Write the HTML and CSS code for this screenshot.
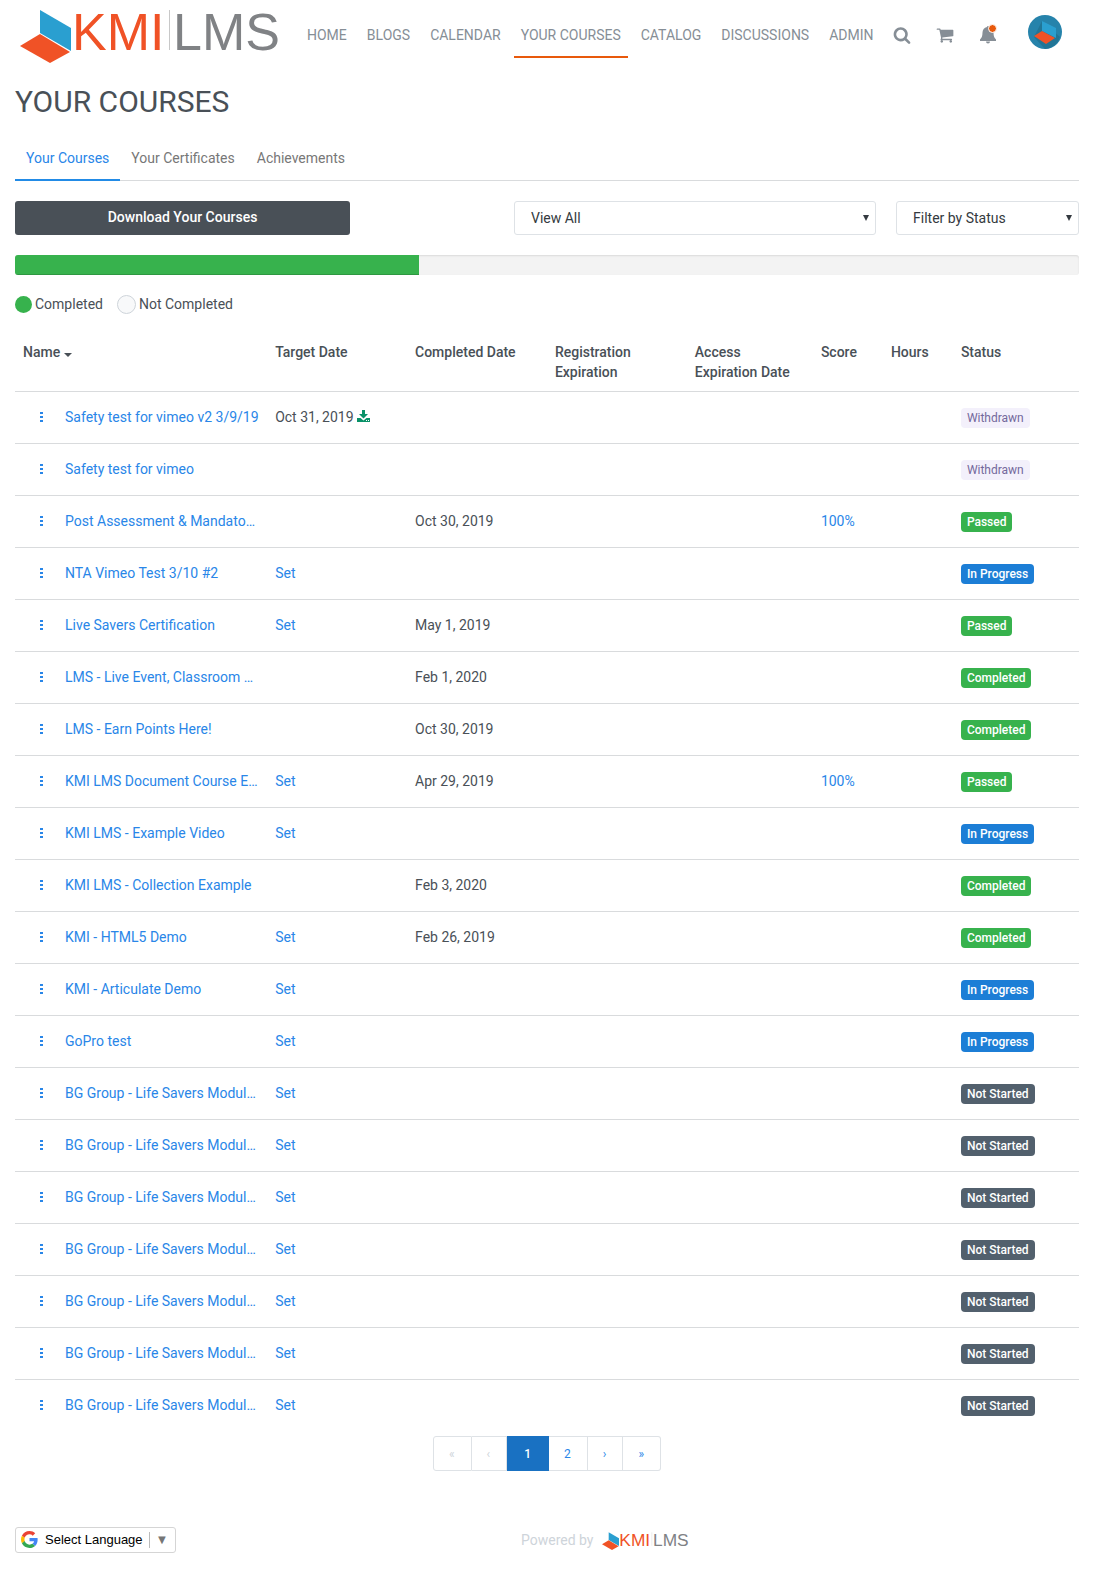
FILE: index.html
```
<!DOCTYPE html>
<html lang="en">

<head>
    <meta charset="UTF-8">
    <meta name="viewport" content="width=device-width, initial-scale=1.0">
    <title>Your Courses - KMI LMS</title>
    <link rel="stylesheet" href="styles.css">
</head>

<body>
    <!-- Shared logo, used in the header and the footer -->
    <svg class="sprite" aria-hidden="true">
        <symbol id="kmi-logo" viewBox="0 0 264 66">
            <path fill="#2a9fd0" d="M20 10 51 28V51L20 33z" />
            <path fill="#f05226" d="M0 46 20 34 50 52 30 63z" />
            <text class="logo-kmi" x="52" y="50">KMI</text>
            <path stroke="#c8c8c8" d="M149.500 10V50" />
            <text class="logo-lms" x="153" y="50">LMS</text>
        </symbol>
    </svg>

    <header class="header">
        <a href="#" class="brand" aria-label="KMI LMS"><svg><use href="#kmi-logo" /></svg></a>
        <nav class="nav">
            <a href="#">HOME</a>
            <a href="#">BLOGS</a>
            <a href="#">CALENDAR</a>
            <a href="#" class="active">YOUR COURSES</a>
            <a href="#">CATALOG</a>
            <a href="#">DISCUSSIONS</a>
            <a href="#">ADMIN</a>
        </nav>
        <div class="header-icons">
            <a href="#" aria-label="Search">
                <svg viewBox="0 0 1792 1792"><path d="M1216 832q0-185-131.500-316.500t-316.500-131.500-316.500 131.500-131.500 316.500 131.500 316.500 316.500 131.500 316.500-131.500 131.500-316.500zm512 832q0 52-38 90t-90 38q-54 0-90-38l-343-342q-179 124-399 124-143 0-273.500-55.500t-225-150-150-225-55.500-273.500 55.500-273.500 150-225 225-150 273.500-55.500 273.500 55.500 225 150 150 225 55.500 273.500q0 220-124 399l343 343q37 37 37 90z" /></svg>
            </a>
            <a href="#" aria-label="Cart">
                <svg viewBox="0 0 1792 1792"><path d="M704 1536q0 52-38 90t-90 38-90-38-38-90 38-90 90-38 90 38 38 90zm896 0q0 52-38 90t-90 38-90-38-38-90 38-90 90-38 90 38 38 90zm128-1088v512q0 24-16.500 42.500t-40.500 21.500l-1044 122q13 60 13 70 0 16-24 64h920q26 0 45 19t19 45-19 45-45 19h-1024q-26 0-45-19t-19-45q0-11 8-31.500t16-36 21.500-40 15.500-29.500l-177-823h-204q-26 0-45-19t-19-45 19-45 45-19h256q16 0 28.500 6.500t19.500 15.500 13 24.500 8 26 5.500 29.500 4.500 26h1201q26 0 45 19t19 45z" /></svg>
            </a>
            <a href="#" class="bell" aria-label="Notifications">
                <svg viewBox="0 0 18 18"><path d="M8 1a1 1 0 0 1 2 0c3 .600 4.500 3 4.500 5.500 0 4 1 5.500 2.500 7V15H1v-1.500c1.500-1.500 2.500-3 2.500-7C3.500 4 5 1.600 8 1zM7 15.500h4a2 2 0 0 1-4 0z" /></svg>
                <span class="dot"></span>
            </a>
        </div>
        <a href="#" class="avatar" aria-label="Profile">
            <svg viewBox="0 0 34 34">
                <circle cx="17" cy="17" r="17" fill="#2683ab" />
                <path fill="#217596" d="M14 6 6 22l11 12a17 17 0 0 0 15-12z" />
                <path fill="#2a9fd0" d="M14 6 28 13V23L14 16z" />
                <path fill="#f05226" d="M6 21 14 16 27 23 18 29z" />
            </svg>
        </a>
    </header>

    <main class="content">
        <h1>YOUR COURSES</h1>

        <nav class="tabs">
            <a href="#" class="active">Your Courses</a>
            <a href="#">Your Certificates</a>
            <a href="#">Achievements</a>
        </nav>

        <div class="toolbar">
            <button type="button" class="btn-download">Download Your Courses</button>
            <div class="select view">
                <select aria-label="View">
                    <option>View All</option>
                </select>
            </div>
            <div class="select">
                <select aria-label="Status">
                    <option>Filter by Status</option>
                </select>
            </div>
        </div>

        <div class="progress" role="progressbar" aria-label="Completed" aria-valuenow="38" aria-valuemin="0" aria-valuemax="100">
            <div class="progress-bar" style="width: 38%"></div>
        </div>

        <div class="legend">
            <span class="circle done"></span><span class="legend-text">Completed</span>
            <span class="circle"></span><span class="legend-text">Not Completed</span>
        </div>

        <table class="courses">
            <colgroup>
                <col class="col-name">
                <col class="col-date">
                <col class="col-date">
                <col class="col-date">
                <col class="col-access">
                <col class="col-small">
                <col class="col-small">
                <col class="col-status">
            </colgroup>
            <thead>
                <tr>
                    <th>Name <span class="caret"></span></th>
                    <th>Target Date</th>
                    <th>Completed Date</th>
                    <th>Registration Expiration</th>
                    <th>Access Expiration Date</th>
                    <th>Score</th>
                    <th>Hours</th>
                    <th>Status</th>
                </tr>
            </thead>
            <tbody>
                <tr>
                    <td><div class="name"><button type="button" class="more" aria-label="Options"></button><a href="#">Safety test for vimeo v2 3/9/19</a></div></td>
                    <td>Oct 31, 2019 <a href="#" class="download" aria-label="Download"><svg viewBox="0 0 13 12"><path fill-rule="evenodd" d="M5 0h3v4h3L6.500 8.500 2 4h3zM0 8h3.500l3 2.500L9.500 8H13v4H0zM9 10v1h1v-1zM11 10v1h1v-1z" /></svg></a></td>
                    <td></td><td></td><td></td><td></td><td></td>
                    <td><span class="badge withdrawn">Withdrawn</span></td>
                </tr>
                <tr>
                    <td><div class="name"><button type="button" class="more" aria-label="Options"></button><a href="#">Safety test for vimeo</a></div></td>
                    <td></td><td></td><td></td><td></td><td></td><td></td>
                    <td><span class="badge withdrawn">Withdrawn</span></td>
                </tr>
                <tr>
                    <td><div class="name"><button type="button" class="more" aria-label="Options"></button><a href="#">Post Assessment &amp; Mandato…</a></div></td>
                    <td></td>
                    <td>Oct 30, 2019</td>
                    <td></td><td></td>
                    <td><a href="#">100%</a></td>
                    <td></td>
                    <td><span class="badge passed">Passed</span></td>
                </tr>
                <tr>
                    <td><div class="name"><button type="button" class="more" aria-label="Options"></button><a href="#">NTA Vimeo Test 3/10 #2</a></div></td>
                    <td><a href="#">Set</a></td>
                    <td></td><td></td><td></td><td></td><td></td>
                    <td><span class="badge in-progress">In Progress</span></td>
                </tr>
                <tr>
                    <td><div class="name"><button type="button" class="more" aria-label="Options"></button><a href="#">Live Savers Certification</a></div></td>
                    <td><a href="#">Set</a></td>
                    <td>May 1, 2019</td>
                    <td></td><td></td><td></td><td></td>
                    <td><span class="badge passed">Passed</span></td>
                </tr>
                <tr>
                    <td><div class="name"><button type="button" class="more" aria-label="Options"></button><a href="#">LMS - Live Event, Classroom …</a></div></td>
                    <td></td>
                    <td>Feb 1, 2020</td>
                    <td></td><td></td><td></td><td></td>
                    <td><span class="badge completed">Completed</span></td>
                </tr>
                <tr>
                    <td><div class="name"><button type="button" class="more" aria-label="Options"></button><a href="#">LMS - Earn Points Here!</a></div></td>
                    <td></td>
                    <td>Oct 30, 2019</td>
                    <td></td><td></td><td></td><td></td>
                    <td><span class="badge completed">Completed</span></td>
                </tr>
                <tr>
                    <td><div class="name"><button type="button" class="more" aria-label="Options"></button><a href="#">KMI LMS Document Course E…</a></div></td>
                    <td><a href="#">Set</a></td>
                    <td>Apr 29, 2019</td>
                    <td></td><td></td>
                    <td><a href="#">100%</a></td>
                    <td></td>
                    <td><span class="badge passed">Passed</span></td>
                </tr>
                <tr>
                    <td><div class="name"><button type="button" class="more" aria-label="Options"></button><a href="#">KMI LMS - Example Video</a></div></td>
                    <td><a href="#">Set</a></td>
                    <td></td><td></td><td></td><td></td><td></td>
                    <td><span class="badge in-progress">In Progress</span></td>
                </tr>
                <tr>
                    <td><div class="name"><button type="button" class="more" aria-label="Options"></button><a href="#">KMI LMS - Collection Example</a></div></td>
                    <td></td>
                    <td>Feb 3, 2020</td>
                    <td></td><td></td><td></td><td></td>
                    <td><span class="badge completed">Completed</span></td>
                </tr>
                <tr>
                    <td><div class="name"><button type="button" class="more" aria-label="Options"></button><a href="#">KMI - HTML5 Demo</a></div></td>
                    <td><a href="#">Set</a></td>
                    <td>Feb 26, 2019</td>
                    <td></td><td></td><td></td><td></td>
                    <td><span class="badge completed">Completed</span></td>
                </tr>
                <tr>
                    <td><div class="name"><button type="button" class="more" aria-label="Options"></button><a href="#">KMI - Articulate Demo</a></div></td>
                    <td><a href="#">Set</a></td>
                    <td></td><td></td><td></td><td></td><td></td>
                    <td><span class="badge in-progress">In Progress</span></td>
                </tr>
                <tr>
                    <td><div class="name"><button type="button" class="more" aria-label="Options"></button><a href="#">GoPro test</a></div></td>
                    <td><a href="#">Set</a></td>
                    <td></td><td></td><td></td><td></td><td></td>
                    <td><span class="badge in-progress">In Progress</span></td>
                </tr>
                <tr>
                    <td><div class="name"><button type="button" class="more" aria-label="Options"></button><a href="#">BG Group - Life Savers Modul…</a></div></td>
                    <td><a href="#">Set</a></td>
                    <td></td><td></td><td></td><td></td><td></td>
                    <td><span class="badge not-started">Not Started</span></td>
                </tr>
                <tr>
                    <td><div class="name"><button type="button" class="more" aria-label="Options"></button><a href="#">BG Group - Life Savers Modul…</a></div></td>
                    <td><a href="#">Set</a></td>
                    <td></td><td></td><td></td><td></td><td></td>
                    <td><span class="badge not-started">Not Started</span></td>
                </tr>
                <tr>
                    <td><div class="name"><button type="button" class="more" aria-label="Options"></button><a href="#">BG Group - Life Savers Modul…</a></div></td>
                    <td><a href="#">Set</a></td>
                    <td></td><td></td><td></td><td></td><td></td>
                    <td><span class="badge not-started">Not Started</span></td>
                </tr>
                <tr>
                    <td><div class="name"><button type="button" class="more" aria-label="Options"></button><a href="#">BG Group - Life Savers Modul…</a></div></td>
                    <td><a href="#">Set</a></td>
                    <td></td><td></td><td></td><td></td><td></td>
                    <td><span class="badge not-started">Not Started</span></td>
                </tr>
                <tr>
                    <td><div class="name"><button type="button" class="more" aria-label="Options"></button><a href="#">BG Group - Life Savers Modul…</a></div></td>
                    <td><a href="#">Set</a></td>
                    <td></td><td></td><td></td><td></td><td></td>
                    <td><span class="badge not-started">Not Started</span></td>
                </tr>
                <tr>
                    <td><div class="name"><button type="button" class="more" aria-label="Options"></button><a href="#">BG Group - Life Savers Modul…</a></div></td>
                    <td><a href="#">Set</a></td>
                    <td></td><td></td><td></td><td></td><td></td>
                    <td><span class="badge not-started">Not Started</span></td>
                </tr>
                <tr>
                    <td><div class="name"><button type="button" class="more" aria-label="Options"></button><a href="#">BG Group - Life Savers Modul…</a></div></td>
                    <td><a href="#">Set</a></td>
                    <td></td><td></td><td></td><td></td><td></td>
                    <td><span class="badge not-started">Not Started</span></td>
                </tr>
            </tbody>
        </table>

        <nav class="pagination" aria-label="Pages">
            <a href="#" class="disabled">«</a>
            <a href="#" class="disabled">‹</a>
            <a href="#" class="active">1</a>
            <a href="#">2</a>
            <a href="#">›</a>
            <a href="#">»</a>
        </nav>
    </main>

    <footer class="footer">
        <button type="button" class="language">
            <svg viewBox="0 0 48 48">
                <path fill="#ea4335" d="M24 9.500c3.540 0 6.710 1.220 9.210 3.600l6.850-6.850C35.900 2.380 30.470 0 24 0 14.620 0 6.510 5.380 2.560 13.220l7.980 6.190C12.430 13.720 17.740 9.500 24 9.500z" />
                <path fill="#4285f4" d="M46.980 24.550c0-1.570-.150-3.090-.380-4.550H24v9.020h12.940c-.580 2.960-2.260 5.480-4.780 7.180l7.730 6c4.510-4.180 7.090-10.360 7.090-17.650z" />
                <path fill="#fbbc05" d="M10.530 28.590c-.480-1.450-.760-2.990-.760-4.590s.270-3.140.760-4.590l-7.980-6.190C.920 16.460 0 20.120 0 24c0 3.880.920 7.540 2.560 10.780l7.970-6.190z" />
                <path fill="#34a853" d="M24 48c6.480 0 11.930-2.130 15.890-5.810l-7.730-6c-2.150 1.450-4.920 2.300-8.160 2.300-6.260 0-11.570-4.220-13.470-9.910l-7.980 6.190C6.510 42.620 14.620 48 24 48z" />
            </svg>
            <span class="language-text">Select Language</span>
            <span class="language-arrow">▼</span>
        </button>
        <div class="powered">Powered by <a href="#" aria-label="KMI LMS"><svg><use href="#kmi-logo" /></svg></a></div>
    </footer>
</body>

</html>
```
FILE: styles.css
```
* {
    box-sizing: border-box;
}

body {
    margin: 0;
    background-color: #fff;
    color: #495057;
    font-family: Roboto, "Liberation Sans", sans-serif;
    font-size: 14px;
    line-height: 20px;
}

a {
    color: #2986e8;
    text-decoration: none;
}

svg {
    display: block;
}

.sprite {
    position: absolute;
    width: 0;
    height: 0;
}

.logo-kmi,
.logo-lms {
    font-family: "Liberation Sans", Arial, sans-serif;
    font-size: 52px;
    fill: #f05226;
}

.logo-lms {
    fill: #808285;
}

/* Header */
.header {
    display: flex;
    align-items: flex-start;
    padding: 0 32px 0 20px;
}

.brand svg {
    width: 264px;
    height: 66px;
}

.nav {
    display: flex;
    gap: 6px;
    margin-left: 16px;
}

.nav a {
    padding: 25px 7px 11px;
    border-bottom: 2px solid transparent;
    color: #868e96;
    white-space: nowrap;
}

.nav a.active {
    border-color: #e8590c;
}

.header-icons {
    display: flex;
    gap: 25px;
    margin: 26px auto 0 12px;
}

.header-icons svg {
    width: 18px;
    height: 18px;
    fill: #868e96;
}

.bell {
    position: relative;
}

.dot {
    position: absolute;
    top: -2px;
    right: 0;
    width: 9px;
    height: 9px;
    border: 1px solid #fff;
    border-radius: 50%;
    background-color: #e8590c;
}

.avatar {
    margin-top: 15px;
}

.avatar svg {
    width: 34px;
    height: 34px;
}

/* Page content */
.content {
    padding: 0 15px;
}

h1 {
    margin: 16px 0 13px;
    font-size: 30px;
    font-weight: 400;
    line-height: 40px;
}

.tabs {
    display: flex;
    border-bottom: 1px solid #d9dbdd;
}

.tabs a {
    margin-bottom: -1px;
    padding: 13px 11px 11px;
    border-bottom: 2px solid transparent;
    color: #777;
}

.tabs a.active {
    border-color: #228be6;
    color: #2986e8;
}

.toolbar {
    display: grid;
    grid-template-columns: 335fr 124fr 362fr 183fr;
    gap: 20px;
    margin-top: 20px;
}

.btn-download {
    height: 34px;
    padding-bottom: 3px;
    border: none;
    border-radius: 3px;
    background-color: #495057;
    color: #fff;
    font-family: inherit;
    font-size: 14px;
    font-weight: 500;
    cursor: pointer;
}

.select {
    position: relative;
}

.select.view {
    grid-column: 3;
}

.select select {
    width: 100%;
    height: 34px;
    padding: 0 16px;
    border: 1px solid #dee2e6;
    border-radius: 3px;
    background-color: #fff;
    color: #343a40;
    font-family: inherit;
    font-size: 14px;
    appearance: none;
}

.select::after {
    content: "";
    position: absolute;
    top: 14px;
    right: 7px;
    border: 3px solid transparent;
    border-top: 6px solid #343a40;
    border-bottom: none;
    pointer-events: none;
}

.progress {
    height: 20px;
    margin-top: 20px;
    overflow: hidden;
    border-radius: 3px;
    background-color: #f3f3f3;
    box-shadow: inset 0 1px 2px rgba(0, 0, 0, 0.1);
}

.progress-bar {
    height: 100%;
    background-color: #37b24d;
    box-shadow: inset 0 -1px 0 rgba(0, 0, 0, 0.15);
}

.legend {
    display: flex;
    align-items: center;
    margin: 19px 0 20px;
}

.circle {
    width: 19px;
    height: 19px;
    border: 1px solid #ced4da;
    border-radius: 50%;
    background-color: #f8f9fa;
}

.circle.done {
    width: 17px;
    height: 17px;
    border: none;
    background-color: #37b24d;
}

.legend-text {
    margin: 0 14px 0 3px;
}

/* Course table */
.courses {
    width: 100%;
    border-collapse: collapse;
    table-layout: fixed;
}

.col-name {
    width: 23.700%;
}

.col-date {
    width: 13.150%;
}

.col-access,
.col-status {
    width: 11.850%;
}

.col-small {
    width: 6.580%;
}

.courses th,
.courses td {
    padding: 7px 8px 9px;
    text-align: left;
}

.courses th {
    padding: 8px 8px 9px;
    font-weight: 500;
    vertical-align: top;
}

.courses td {
    height: 52px;
    border-top: 1px solid #d9dbdd;
    white-space: nowrap;
}

.courses td:last-child {
    padding: 8px;
}

.caret {
    display: inline-block;
    border: 4px solid transparent;
    border-top-color: #495057;
    border-bottom: none;
}

.name {
    display: flex;
    align-items: center;
}

.more {
    width: 3px;
    height: 10px;
    margin: 0 22px 0 17px;
    padding: 0;
    border: none;
    background: repeating-linear-gradient(#2986e8 0 2px, transparent 2px 4px);
    cursor: pointer;
}

.download {
    display: inline-block;
}

.download svg {
    width: 13px;
    height: 12px;
    fill: #099268;
}

.badge {
    display: inline-block;
    padding: 0 6px;
    border-radius: 4px;
    color: #fff;
    font-size: 12px;
    font-weight: 500;
    vertical-align: middle;
}

.withdrawn {
    background-color: #f3f0fb;
    color: #74699b;
    font-weight: 400;
}

.passed,
.completed {
    background-color: #37b24d;
}

.in-progress {
    background-color: #1c7ed6;
}

.not-started {
    background-color: #52606d;
}

.pagination {
    display: flex;
    justify-content: center;
    margin-top: 4px;
    font-size: 12px;
}

.pagination a {
    height: 35px;
    padding: 7px 16px 7px 15px;
    border: 1px solid #dee2e6;
    border-left: none;
}

.pagination a:first-child {
    border-left: 1px solid #dee2e6;
    border-radius: 3px 0 0 3px;
}

.pagination a:last-child {
    border-radius: 0 3px 3px 0;
}

.pagination a.disabled {
    color: #ced4da;
}

.pagination a.active {
    padding: 7px 17px;
    border-color: #1971c2;
    background-color: #1971c2;
    color: #fff;
    font-weight: 500;
}

/* Footer */
.footer {
    display: grid;
    grid-template-columns: 506fr 558fr;
    align-items: center;
    margin-top: 56px;
    padding: 0 15px 40px;
}

.language {
    display: flex;
    align-items: center;
    justify-self: start;
    height: 26px;
    padding: 0 7px 0 5px;
    border: 1px solid #d5d5d5;
    border-radius: 3px;
    background-color: #fff;
    color: #000;
    font-family: "Liberation Sans", Arial, sans-serif;
    font-size: 13px;
    cursor: pointer;
}

.language svg {
    width: 17px;
    height: 17px;
    margin-right: 7px;
}

.language-text {
    padding-right: 6px;
    border-right: 1px solid #bbb;
    line-height: 16px;
}

.language-arrow {
    margin-left: 6px;
    color: #767676;
}

.powered {
    display: flex;
    align-items: center;
    gap: 8px;
    color: #ced4da;
}

.powered svg {
    width: 88px;
    height: 22px;
}
```
